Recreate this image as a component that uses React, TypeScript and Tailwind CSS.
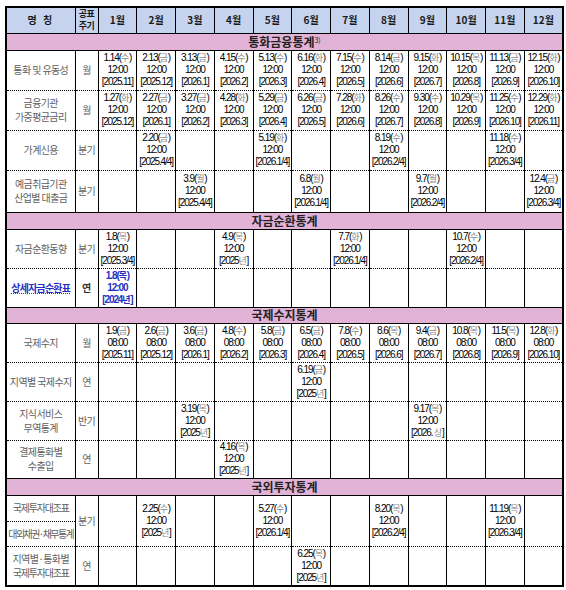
import React from 'react';

type Entry = { m: number; d: string; w: string; t?: string; p: string; s?: string };
type Row = { name: string[]; cycle: string; h: string; entries: Entry[] };
type Section = { title: string; sup?: string; h: string; rows: Row[] };

const months = [1, 2, 3, 4, 5, 6, 7, 8, 9, 10, 11, 12];

const mk = (list: Array<[number, string, string, string, string?]>, t = '12:00'): Entry[] =>
  list.map(([m, d, w, p, s]) => ({ m, d, w, t, p, s }));

const sections: Section[] = [
  {
    title: '통화금융통계',
    sup: '3)',
    h: 'h-[17px]',
    rows: [
      {
        name: ['통화 및 유동성'],
        cycle: '월',
        h: 'h-[40px]',
        entries: mk([
          [1, '1.14', '수', '2025.11'],
          [2, '2.13', '금', '2025.12'],
          [3, '3.13', '금', '2026.1'],
          [4, '4.15', '수', '2026.2'],
          [5, '5.13', '수', '2026.3'],
          [6, '6.16', '화', '2026.4'],
          [7, '7.15', '수', '2026.5'],
          [8, '8.14', '금', '2026.6'],
          [9, '9.15', '화', '2026.7'],
          [10, '10.15', '목', '2026.8'],
          [11, '11.13', '금', '2026.9'],
          [12, '12.15', '화', '2026.10'],
        ]),
      },
      {
        name: ['금융기관', '가중평균금리'],
        cycle: '월',
        h: 'h-[40px]',
        entries: mk([
          [1, '1.27', '화', '2025.12'],
          [2, '2.27', '금', '2026.1'],
          [3, '3.27', '금', '2026.2'],
          [4, '4.28', '화', '2026.3'],
          [5, '5.29', '금', '2026.4'],
          [6, '6.26', '금', '2026.5'],
          [7, '7.28', '화', '2026.6'],
          [8, '8.26', '수', '2026.7'],
          [9, '9.30', '수', '2026.8'],
          [10, '10.29', '목', '2026.9'],
          [11, '11.25', '수', '2026.10'],
          [12, '12.29', '화', '2026.11'],
        ]),
      },
      {
        name: ['가계신용'],
        cycle: '분기',
        h: 'h-[40px]',
        entries: mk([
          [2, '2.20', '금', '2025.4/4'],
          [5, '5.19', '화', '2026.1/4'],
          [8, '8.19', '수', '2026.2/4'],
          [11, '11.18', '수', '2026.3/4'],
        ]),
      },
      {
        name: ['예금취급기관', '산업별 대출금'],
        cycle: '분기',
        h: 'h-[42px]',
        entries: mk([
          [3, '3.9', '월', '2025.4/4'],
          [6, '6.8', '월', '2026.1/4'],
          [9, '9.7', '월', '2026.2/4'],
          [12, '12.4', '금', '2026.3/4'],
        ]),
      },
    ],
  },
  {
    title: '자금순환통계',
    h: 'h-[17px]',
    rows: [
      {
        name: ['자금순환동향'],
        cycle: '분기',
        h: 'h-[39px]',
        entries: mk([
          [1, '1.8', '목', '2025.3/4'],
          [4, '4.9', '목', '2025', '년'],
          [7, '7.7', '화', '2026.1/4'],
          [10, '10.7', '수', '2026.2/4'],
        ]),
      },
    ],
  },
  {
    title: '국제수지통계',
    h: 'h-[16px]',
    rows: [
      {
        name: ['국제수지'],
        cycle: '월',
        h: 'h-[39px]',
        entries: mk(
          [
            [1, '1.9', '금', '2025.11'],
            [2, '2.6', '금', '2025.12'],
            [3, '3.6', '금', '2026.1'],
            [4, '4.8', '수', '2026.2'],
            [5, '5.8', '금', '2026.3'],
            [6, '6.5', '금', '2026.4'],
            [7, '7.8', '수', '2026.5'],
            [8, '8.6', '목', '2026.6'],
            [9, '9.4', '금', '2026.7'],
            [10, '10.8', '목', '2026.8'],
            [11, '11.5', '목', '2026.9'],
            [12, '12.8', '화', '2026.10'],
          ],
          '08:00'
        ),
      },
      {
        name: ['지역별 국제수지'],
        cycle: '연',
        h: 'h-[39px]',
        entries: mk([[6, '6.19', '금', '2025', '년']]),
      },
      {
        name: ['지식서비스', '무역통계'],
        cycle: '반기',
        h: 'h-[39px]',
        entries: mk([
          [3, '3.19', '목', '2025', '년'],
          [9, '9.17', '목', '2026. ', '상'],
        ]),
      },
      {
        name: ['결제통화별', '수출입'],
        cycle: '연',
        h: 'h-[38px]',
        entries: mk([[4, '4.16', '목', '2025', '년']]),
      },
    ],
  },
];

const gray = 'text-[#8a8a8a] text-[9px] tracking-[-0.3px]';

const Data = ({ e, blue }: { e: Entry; blue?: boolean }) => (
  <div className={blue ? 'text-[#1f2fbf] font-bold' : 'text-black'}>
    <div>
      {e.d}(<span className={blue ? 'text-[9px] tracking-[-0.3px]' : gray}>{e.w}</span>)
    </div>
    <div>{e.t}</div>
    <div>
      [{e.p}
      {e.s && <span className={blue ? 'text-[9px] tracking-[-0.3px]' : gray}>{e.s}</span>}]
    </div>
  </div>
);

const td = 'border-l border-r border-b border-black [border-bottom-style:dotted] p-0 text-center align-middle';
const nameTd = `${td} text-[10px] leading-[14px] tracking-[-0.6px] text-[#5f5f5f] font-['Noto_Sans_CJK_KR',sans-serif]`;

const MonthCells = ({ entries, blue, rowSpan }: { entries: Entry[]; blue?: boolean; rowSpan?: number }) => (
  <>
    {months.map((m) => {
      const e = entries.find((x) => x.m === m);
      return (
        <td key={m} rowSpan={rowSpan} className={td}>
          {e && <Data e={e} blue={blue} />}
        </td>
      );
    })}
  </>
);

const SectionRow = ({ title, sup, h }: { title: string; sup?: string; h: string }) => (
  <tr className={`${h} bg-[#e2b3d7]`}>
    <td
      colSpan={14}
      className="border border-black p-0 text-center align-middle text-[12px] leading-[14px] tracking-[0px] font-bold text-[#222] font-['Noto_Sans_CJK_KR',sans-serif]"
    >
      {title}
      {sup && <sup className="text-[7px] font-normal">{sup}</sup>}
    </td>
  </tr>
);

const BodyRow = ({ row }: { row: Row }) => (
  <tr className={row.h}>
    <td className={nameTd}>
      {row.name.map((n) => (
        <div key={n} className="whitespace-nowrap">
          {n}
        </div>
      ))}
    </td>
    <td className={nameTd}>{row.cycle}</td>
    <MonthCells entries={row.entries} />
  </tr>
);

export default function App() {
  return (
    <div className="bg-white pl-[5px] pt-[6px] w-[566px] h-[590px] overflow-hidden">
      <table className="table-fixed border-collapse border-2 border-black w-[558px] text-[10px] leading-[12px] tracking-[-1.1px] font-['Liberation_Sans','Noto_Sans_CJK_KR',sans-serif]">
        <colgroup>
          <col className="w-[69px]" />
          <col className="w-[23px]" />
          {months.map((m) => (
            <col key={m} className="w-[38.75px]" />
          ))}
        </colgroup>
        <thead>
          <tr className="h-[26px] bg-[#c5d3ee] font-['Noto_Sans_CJK_KR',sans-serif] font-bold text-[#1a1a1a]">
            <th className="border border-black p-0 text-[10px] tracking-[2px]">명 칭</th>
            <th className="border border-black p-0 text-[9px] leading-[12px] tracking-[-0.5px]">
              <div>공표</div>
              <div>주기</div>
            </th>
            {months.map((m) => (
              <th key={m} className="border border-black p-0 text-[10px] tracking-[0px]">
                {m}월
              </th>
            ))}
          </tr>
        </thead>
        <tbody>
          {sections.map((s) => (
            <React.Fragment key={s.title}>
              <SectionRow title={s.title} sup={s.sup} h={s.h} />
              {s.rows.map((r) => (
                <BodyRow key={r.name.join('')} row={r} />
              ))}
              {s.title === '자금순환통계' && (
                <tr className="h-[39px]">
                  <td className={`${td} text-[10px] tracking-[-0.8px] font-bold text-[#1f2fbf] underline decoration-dotted font-['Noto_Sans_CJK_KR',sans-serif]`}>
                    상세자금순환표
                  </td>
                  <td className={`${td} text-[10px] tracking-[0px] font-bold text-[#333] font-['Noto_Sans_CJK_KR',sans-serif]`}>연</td>
                  <MonthCells entries={[{ m: 1, d: '1.8', w: '목', t: '12:00', p: '2024', s: '년' }]} blue />
                </tr>
              )}
            </React.Fragment>
          ))}
          <SectionRow title="국외투자통계" h="h-[17px]" />
          <tr className="h-[26px]">
            <td className={`${nameTd} tracking-[-1.2px]`}>국제투자대조표</td>
            <td rowSpan={2} className={nameTd}>
              분기
            </td>
            <MonthCells
              rowSpan={2}
              entries={mk([
                [2, '2.25', '수', '2025', '년'],
                [5, '5.27', '수', '2026.1/4'],
                [8, '8.20', '목', '2026.2/4'],
                [11, '11.19', '목', '2026.3/4'],
              ])}
            />
          </tr>
          <tr className="h-[25px]">
            <td className={`${nameTd} tracking-[-1.6px] whitespace-nowrap`}>대외채권·채무통계</td>
          </tr>
          <tr className="h-[40px]">
            <td className={nameTd}>
              <div className="whitespace-nowrap">지역별·통화별</div>
              <div className="whitespace-nowrap tracking-[-1.2px]">국제투자대조표</div>
            </td>
            <td className={nameTd}>연</td>
            <MonthCells entries={mk([[6, '6.25', '목', '2025', '년']])} />
          </tr>
        </tbody>
      </table>
      <p className="mt-[1px] pl-[20px] text-[11px] leading-[14px] text-[#777] font-['Noto_Sans_CJK_KR',sans-serif] whitespace-nowrap">
        주: 1) 공표시각은 사정에 따라 변경될 수 있으며, 변경시 사전에 공지함
      </p>
    </div>
  );
}
